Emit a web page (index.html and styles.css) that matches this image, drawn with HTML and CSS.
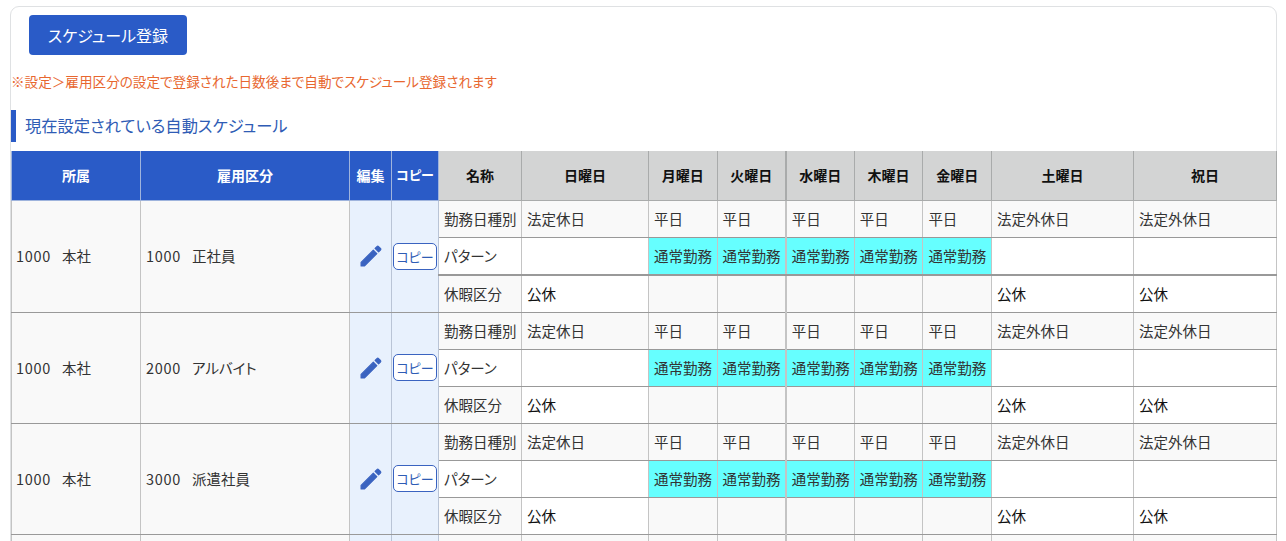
FILE: index.html
```html
<!DOCTYPE html>
<html>
<head>
    <meta charset="UTF-8" />
    <title>スケジュール登録</title>
    <link rel="stylesheet" href="styles.css">
</head>
<body>
<div class="card">
    <div class="actions">
        <button class="btn-main">スケジュール登録</button>
    </div>
    <p class="notice">※設定＞雇用区分の設定で登録された日数後まで自動でスケジュール登録されます</p>
    <h2 class="heading">現在設定されている自動スケジュール</h2>
    <table class="sched">
        <colgroup>
            <col class="c-org"><col class="c-emp"><col class="c-edit"><col class="c-copy"><col class="c-name">
            <col class="c-sun"><col class="c-day"><col class="c-day"><col class="c-day"><col class="c-day"><col class="c-day">
            <col class="c-sat"><col class="c-hol">
        </colgroup>
        <thead>
            <tr>
                <th class="blue">所属</th>
                <th class="blue">雇用区分</th>
                <th class="blue">編集</th>
                <th class="blue tight">コピー</th>
                <th>名称</th>
                <th>日曜日</th>
                <th>月曜日</th>
                <th>火曜日</th>
                <th class="wed">水曜日</th>
                <th>木曜日</th>
                <th>金曜日</th>
                <th>土曜日</th>
                <th>祝日</th>
            </tr>
        </thead>
        <tbody>
            <tr>
                <td class="side" rowspan="3"><span class="code">1000</span>本社</td>
                <td rowspan="3"><span class="code">1000</span>正社員</td>
                <td class="tool" rowspan="3"><svg class="pencil" viewBox="0 0 24 24"><path d="M3.5 17.5V20.500h3l10.500-10.500-3-3zM15.500 5.500l3 3 1.600-1.600a1 1 0 0 0 0-1.400l-1.600-1.600a1 1 0 0 0-1.400 0z"/></svg></td>
                <td class="tool" rowspan="3"><button class="btn-copy">コピー</button></td>
                <td>勤務日種別</td><td>法定休日</td><td>平日</td><td>平日</td><td class="wed">平日</td><td>平日</td><td>平日</td><td>法定外休日</td><td>法定外休日</td>
            </tr>
            <tr class="pat thick">
                <td>パターン</td><td></td><td class="on">通常勤務</td><td class="on">通常勤務</td><td class="on wed">通常勤務</td><td class="on">通常勤務</td><td class="on">通常勤務</td><td></td><td></td>
            </tr>
            <tr class="off">
                <td>休暇区分</td><td class="w">公休</td><td></td><td></td><td class="wed"></td><td></td><td></td><td class="w">公休</td><td class="w">公休</td>
            </tr>
            <tr>
                <td class="side" rowspan="3"><span class="code">1000</span>本社</td>
                <td rowspan="3"><span class="code">2000</span>アルバイト</td>
                <td class="tool" rowspan="3"><svg class="pencil" viewBox="0 0 24 24"><path d="M3.5 17.5V20.500h3l10.500-10.500-3-3zM15.500 5.500l3 3 1.600-1.600a1 1 0 0 0 0-1.400l-1.600-1.600a1 1 0 0 0-1.400 0z"/></svg></td>
                <td class="tool" rowspan="3"><button class="btn-copy">コピー</button></td>
                <td>勤務日種別</td><td>法定休日</td><td>平日</td><td>平日</td><td class="wed">平日</td><td>平日</td><td>平日</td><td>法定外休日</td><td>法定外休日</td>
            </tr>
            <tr class="pat">
                <td>パターン</td><td></td><td class="on">通常勤務</td><td class="on">通常勤務</td><td class="on wed">通常勤務</td><td class="on">通常勤務</td><td class="on">通常勤務</td><td></td><td></td>
            </tr>
            <tr class="off">
                <td>休暇区分</td><td class="w">公休</td><td></td><td></td><td class="wed"></td><td></td><td></td><td class="w">公休</td><td class="w">公休</td>
            </tr>
            <tr>
                <td class="side" rowspan="3"><span class="code">1000</span>本社</td>
                <td rowspan="3"><span class="code">3000</span>派遣社員</td>
                <td class="tool" rowspan="3"><svg class="pencil" viewBox="0 0 24 24"><path d="M3.5 17.5V20.500h3l10.500-10.500-3-3zM15.500 5.500l3 3 1.600-1.600a1 1 0 0 0 0-1.400l-1.600-1.600a1 1 0 0 0-1.400 0z"/></svg></td>
                <td class="tool" rowspan="3"><button class="btn-copy">コピー</button></td>
                <td>勤務日種別</td><td>法定休日</td><td>平日</td><td>平日</td><td class="wed">平日</td><td>平日</td><td>平日</td><td>法定外休日</td><td>法定外休日</td>
            </tr>
            <tr class="pat">
                <td>パターン</td><td></td><td class="on">通常勤務</td><td class="on">通常勤務</td><td class="on wed">通常勤務</td><td class="on">通常勤務</td><td class="on">通常勤務</td><td></td><td></td>
            </tr>
            <tr class="off">
                <td>休暇区分</td><td class="w">公休</td><td></td><td></td><td class="wed"></td><td></td><td></td><td class="w">公休</td><td class="w">公休</td>
            </tr>
            <tr>
                <td class="side"></td><td></td><td class="tool"></td><td class="tool"></td>
                <td></td><td></td><td></td><td></td><td class="wed"></td><td></td><td></td><td></td><td></td>
            </tr>
        </tbody>
    </table>
</div>
</body>
</html>
```

FILE: styles.css
```css
*{
    margin: 0;
    padding: 0;
    box-sizing: border-box;
}
html, body{
    height: 100%;
    overflow: hidden;
}
body{
    padding: 6px 9px 0 10px;
    background-color: #fff;
    color: #333;
    font-family: "Noto Sans CJK JP", "Noto Sans", sans-serif;
    font-size: 14px;
}
.card{
    border: 1px solid #dfe1e3;
    border-radius: 9px;
    height: 800px;
    background-color: #fff;
}
.actions{
    padding: 8px 0 0 18px;
}
.btn-main{
    width: 158px;
    height: 40px;
    border: 0;
    border-radius: 4px;
    background-color: #2a5bc7;
    color: #fff;
    font-family: inherit;
    font-size: 16px;
    font-feature-settings: "palt";
}
.notice{
    margin-top: 16px;
    line-height: 20px;
    color: #e8672f;
    font-size: 13.600px;
    font-feature-settings: "palt";
}
.heading{
    margin-top: 19px;
    height: 32px;
    padding-left: 9px;
    border-left: 5px solid #2a5bc7;
    line-height: 30px;
    color: #2f5cb5;
    font-size: 16.300px;
    font-weight: normal;
    font-feature-settings: "palt";
}
.sched{
    margin-top: 9px;
    width: 1265px;
    table-layout: fixed;
    border-collapse: collapse;
}
.c-org{ width: 129px; }
.c-emp{ width: 209px; }
.c-edit{ width: 42px; }
.c-copy{ width: 47px; }
.c-name{ width: 83px; }
.c-sun{ width: 127px; }
.c-day{ width: 68.600px; }
.c-sat{ width: 142px; }
.c-hol{ width: 143px; }
th{
    height: 49px;
    padding-bottom: 1px;
    border: 1px solid #a9abab;
    border-top: 0;
    background-color: #d3d4d4;
    color: #111;
    font-size: 14px;
    font-weight: bold;
    text-align: center;
    font-feature-settings: "palt";
}
th.blue{
    border-color: #9fb4dd;
    background-color: #2a5bc7;
    color: #fff;
}
th.tight{
    font-size: 13px;
}
td{
    height: 37px;
    padding: 0 5px 1px;
    border: 1px solid #c4c4c4;
    border-top-color: #999;
    border-bottom-color: #999;
    background-color: #f9f9f9;
    font-size: 14.500px;
    white-space: nowrap;
    overflow: hidden;
    font-feature-settings: "palt";
}
.side{
    padding-left: 4px;
}
.code{
    display: inline-block;
    width: 46px;
    letter-spacing: 0.700px;
}
.tool{
    padding: 0;
    border-color: #b9c4d6 #b9c4d6 #999;
    background-color: #e8f1fd;
    text-align: center;
}
.pat td{
    background-color: #fff;
}
.off td.w{
    background-color: #fff;
    color: #111;
}
.pat td.on{
    background-color: #66ffff;
}
.thick td{
    height: 38px;
    border-bottom: 2px solid #999;
}
.wed{
    border-left-width: 2px;
}
.pencil{
    display: block;
    margin: 0 auto;
    width: 28px;
    height: 28px;
    fill: #3a63c0;
    stroke: #3a63c0;
    stroke-width: 1;
    stroke-linejoin: round;
}
.btn-copy{
    width: 44px;
    height: 27px;
    border: 1px solid #3a63c0;
    border-radius: 5px;
    background-color: #fff;
    color: #2f5cb5;
    font-family: inherit;
    font-size: 13px;
    font-feature-settings: "palt";
}
```
